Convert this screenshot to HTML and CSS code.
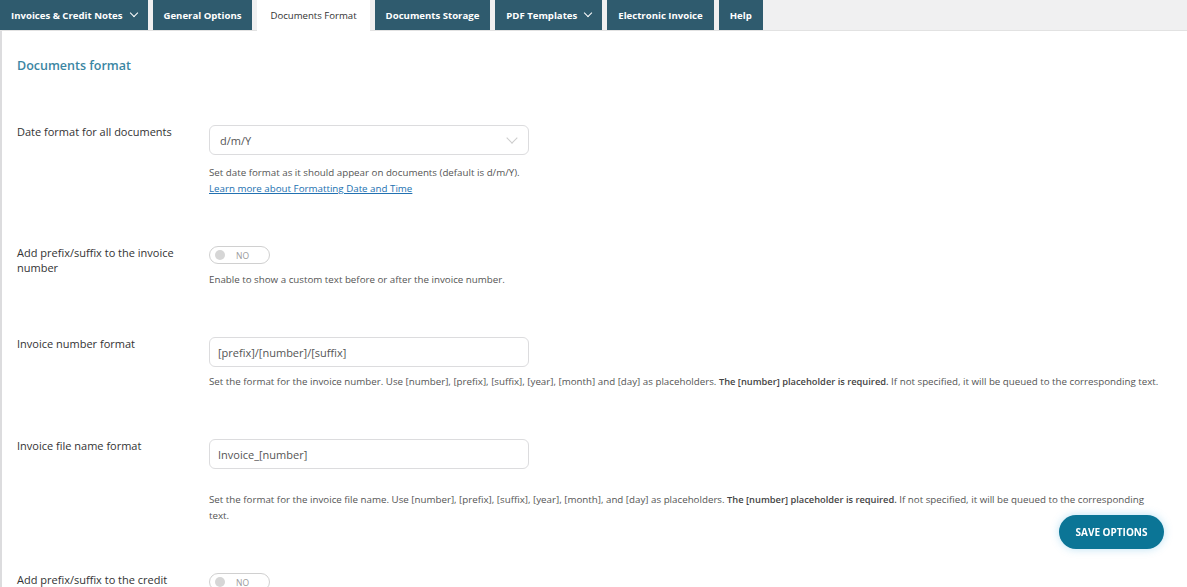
FILE: index.html
```html
<!DOCTYPE html>
<html lang="en">
<head>
    <meta charset="UTF-8">
    <meta name="viewport" content="width=device-width, initial-scale=1.0">
    <title>Documents Format</title>
    <link rel="stylesheet" href="styles.css">
</head>
<body>
    <nav class="tabs">
        <a class="tab">Invoices &amp; Credit Notes <span class="chev"></span></a>
        <a class="tab">General Options</a>
        <a class="tab active">Documents Format</a>
        <a class="tab">Documents Storage</a>
        <a class="tab">PDF Templates <span class="chev"></span></a>
        <a class="tab">Electronic Invoice</a>
        <a class="tab">Help</a>
    </nav>

    <section class="panel">
        <h2>Documents format</h2>

        <div class="row">
            <label>Date format for all documents</label>
            <div class="field">
                <div class="select">d/m/Y <span class="select-chev"></span></div>
                <p class="desc">Set date format as it should appear on documents (default is d/m/Y).<br>
                    <a href="#">Learn more about Formatting Date and Time</a></p>
            </div>
        </div>

        <div class="row">
            <label>Add prefix/suffix to the invoice number</label>
            <div class="field">
                <div class="toggle"><span class="knob"></span>NO</div>
                <p class="desc">Enable to show a custom text before or after the invoice number.</p>
            </div>
        </div>

        <div class="row">
            <label>Invoice number format</label>
            <div class="field">
                <input type="text" value="[prefix]/[number]/[suffix]">
                <p class="desc tight">Set the format for the invoice number. Use [number], [prefix], [suffix], [year], [month] and [day] as placeholders. <b>The [number] placeholder is required.</b> If not specified, it will be queued to the corresponding text.</p>
            </div>
        </div>

        <div class="row">
            <label>Invoice file name format</label>
            <div class="field">
                <input type="text" value="Invoice_[number]">
                <p class="desc far">Set the format for the invoice file name. Use [number], [prefix], [suffix], [year], [month], and [day] as placeholders. <b>The [number] placeholder is required.</b> If not specified, it will be queued to the corresponding text.</p>
            </div>
        </div>

        <div class="row">
            <label>Add prefix/suffix to the credit note number</label>
            <div class="field">
                <div class="toggle"><span class="knob"></span>NO</div>
            </div>
        </div>
    </section>

    <button class="save">SAVE OPTIONS</button>
</body>
</html>
```

FILE: styles.css
```css
body {
    font-family: "Open Sans", "Noto Sans", sans-serif;
    margin: 0;
    padding: 0;
    background-color: #fff;
    color: #333;
    overflow: hidden;
}
.tabs {
    display: flex;
    gap: 5px;
    height: 30px;
    background-color: #f0f0f1;
    border-bottom: 1px solid #e2e2e2;
}
.tab {
    display: flex;
    align-items: center;
    gap: 8px;
    padding: 0 11px;
    background-color: #2f5b6e;
    color: white;
    font-size: 9.6px;
    font-weight: 700;
    text-decoration: none;
    white-space: nowrap;
}
.tab.active {
    background-color: white;
    color: #333;
    font-weight: 500;
    padding: 0 13px;
    margin-bottom: -1px;
}
.chev {
    width: 5px;
    height: 5px;
    border-right: 1.3px solid white;
    border-bottom: 1.3px solid white;
    transform: rotate(45deg);
    margin-top: -4px;
}
.panel {
    border-left: 2px solid #dcdcde;
    padding: 1px 17px 0 15px;
}
h2 {
    margin: 25px 0 50px;
    font-size: 12.5px;
    font-weight: 600;
    color: #3b86a3;
}
.row {
    display: grid;
    grid-template-columns: 192px 1fr;
    margin-bottom: 48px;
}
label {
    font-size: 11px;
    line-height: 15px;
    font-weight: 500;
    padding-right: 27px;
}
.select, input {
    box-sizing: border-box;
    width: 320px;
    height: 30px;
    padding: 0 8px;
    margin-top: 1px;
    border: 1px solid #dcdcde;
    border-radius: 6px;
    font-family: inherit;
    font-size: 11px;
    color: #555;
    display: flex;
    align-items: center;
    justify-content: space-between;
}
.select {
    padding-left: 10px;
}
.select-chev {
    width: 7px;
    height: 7px;
    border-right: 1px solid #ccc;
    border-bottom: 1px solid #ccc;
    transform: rotate(45deg);
    margin: -5px 4px 0 0;
}
.toggle {
    box-sizing: border-box;
    width: 61px;
    height: 18px;
    margin-top: 1px;
    border: 1px solid #d0d0d0;
    border-radius: 10px;
    display: flex;
    align-items: center;
    gap: 11px;
    padding-left: 5px;
    font-size: 8.5px;
    color: #999;
}
.knob {
    width: 10px;
    height: 10px;
    border-radius: 50%;
    background-color: #d6d6d6;
}
.desc {
    max-width: 953px;
    margin: 8px 0 0;
    font-size: 9.75px;
    line-height: 16px;
    color: #555;
}
.row:first-of-type .desc {
    margin-top: 10px;
}
.desc.tight {
    margin-top: 7px;
}
.desc.far {
    margin-top: 23px;
}
.desc b {
    font-size: 9.3px;
    font-weight: 600;
    color: #444;
}
.desc a {
    color: #2271b1;
}
.save {
    position: fixed;
    left: 1059px;
    top: 515px;
    width: 105px;
    height: 34px;
    border: none;
    border-radius: 17px;
    background-color: #0b7596;
    color: white;
    font-family: inherit;
    font-size: 10px;
    font-weight: 700;
    box-shadow: 0 0 8px rgba(60, 170, 220, 0.35);
    cursor: pointer;
}
```
